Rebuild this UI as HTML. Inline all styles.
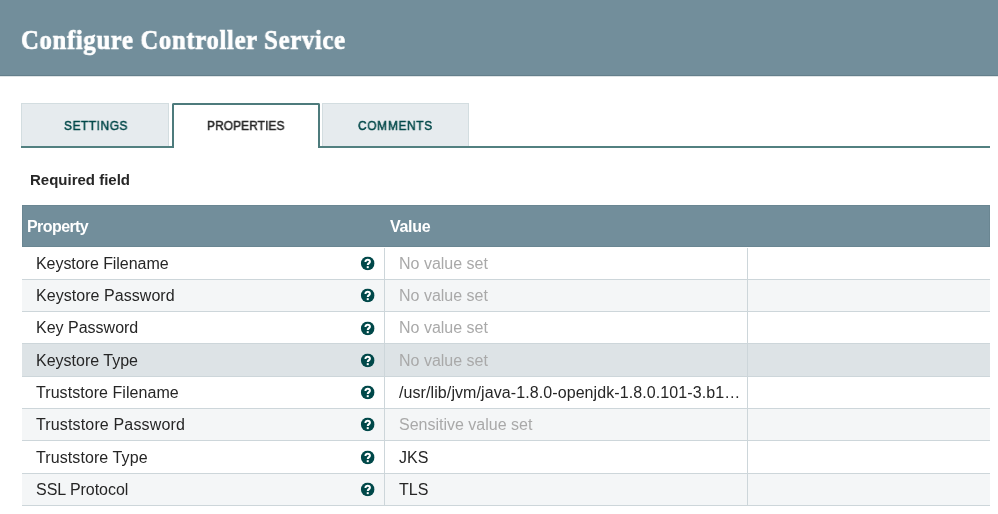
<!DOCTYPE html>
<html><head><meta charset="utf-8">
<style>
*{margin:0;padding:0;box-sizing:border-box}
html,body{width:998px;height:514px;overflow:hidden;background:#fff;font-family:"Liberation Sans",sans-serif;color:#262626}
.t{position:absolute;white-space:nowrap;line-height:1;will-change:transform}
#hdr{position:absolute;left:0;top:0;width:998px;height:76px;background:#728e9b;border-bottom:1px solid #647f8b}
#title{left:21px;top:26px;font-family:"Liberation Serif",serif;font-weight:bold;font-size:28px;letter-spacing:0.79px;color:#fff;-webkit-text-stroke:0.7px #fff;transform:scaleX(0.88);transform-origin:0 0}
.tab{position:absolute;top:103px;height:44px;background:#e6ebee;border:1px solid #d3dde0;border-bottom:none}
#tabline{position:absolute;left:21px;top:146px;width:969px;height:2px;background:#528080}
.tab.sel{background:#fff;border:2px solid #4d7b7c;border-bottom:none;height:45px;border-radius:2px 2px 0 0}
.tl{font-size:13.5px;font-weight:normal;-webkit-text-stroke:0.5px currentColor;color:#004849;top:119px;transform:scaleX(0.88);transform-origin:0 0}
#req{left:30px;top:171.5px;font-size:15px;font-weight:bold;color:#262626}
#th{position:absolute;left:22px;top:205px;width:968px;height:42px;background:#728e9b;border:1px solid #6a8692}
.th{color:#fff;font-weight:bold;font-size:16px;top:219px}
.row{position:absolute;left:22px;width:968px;border-bottom:1px solid #cdd6da}
.odd{background:#fff}
.even{background:#f4f6f7}
.hl{background:#dde3e6}
.vd{position:absolute;top:248px;width:1px;height:258px;background:#cdd6da}
.n{left:36px;font-size:16px}
.v{left:399px;font-size:16px}
.ph{color:#a9a9a9}
.q{position:absolute;left:360px;width:14px;height:14px;transform:translate(0.7px,0.4px)}
</style></head><body>
<div id="hdr"></div><div style="position:absolute;left:0;top:76px;width:998px;height:1px;background:#dfe4e6"></div>
<div class="t" id="title">Configure Controller Service</div>
<div class="tab" style="left:21px;width:148px"></div>
<div class="tab" style="left:322px;width:147px"></div>
<div id="tabline"></div>
<div class="tab sel" style="left:172px;width:148px"></div>
<div class="t tl" style="left:64px;letter-spacing:0.65px">SETTINGS</div>
<div class="t tl" style="left:207px;color:#262626;letter-spacing:0.13px">PROPERTIES</div>
<div class="t tl" style="left:358px;letter-spacing:0.8px">COMMENTS</div>
<div class="t" id="req">Required field</div>
<div id="th"></div>
<div class="t th" style="left:27px;letter-spacing:-0.58px">Property</div>
<div class="t th" style="left:390px;letter-spacing:-0.3px">Value</div>

<div class="row odd" style="top:247px;height:33px"></div>
<div class="row even" style="top:280px;height:32px"></div>
<div class="row odd" style="top:312px;height:32px"></div>
<div class="row hl" style="top:344px;height:33px"></div>
<div class="row odd" style="top:377px;height:32px"></div>
<div class="row even" style="top:409px;height:32px"></div>
<div class="row odd" style="top:441px;height:33px"></div>
<div class="row even" style="top:474px;height:32px"></div>
<div class="vd" style="left:384px"></div>
<div class="vd" style="left:747px"></div>

<div class="t n" style="top:256px;letter-spacing:-0.05px">Keystore Filename</div>
<div class="t n" style="top:288px;letter-spacing:0.05px">Keystore Password</div>
<div class="t n" style="top:320px;letter-spacing:0px">Key Password</div>
<div class="t n" style="top:353px;letter-spacing:0px">Keystore Type</div>
<div class="t n" style="top:385px;letter-spacing:0.06px">Truststore Filename</div>
<div class="t n" style="top:417px;letter-spacing:0.15px">Truststore Password</div>
<div class="t n" style="top:450px;letter-spacing:0.09px">Truststore Type</div>
<div class="t n" style="top:482px;letter-spacing:-0.04px">SSL Protocol</div>

<div class="t v ph" style="top:256px">No value set</div>
<div class="t v ph" style="top:288px">No value set</div>
<div class="t v ph" style="top:320px">No value set</div>
<div class="t v ph" style="top:353px">No value set</div>
<div class="t v" style="top:385px;letter-spacing:0.09px">/usr/lib/jvm/java-1.8.0-openjdk-1.8.0.101-3.b1…</div>
<div class="t v ph" style="top:417px">Sensitive value set</div>
<div class="t v" style="top:450px">JKS</div>
<div class="t v" style="top:482px">TLS</div>

<svg class="q" style="top:256px" viewBox="0 0 14 14"><circle cx="7" cy="7" r="6.8" fill="#004849"/><path d="M4.75 5.5C4.75 4.1 5.8 3.3 6.95 3.3C8.25 3.3 9.2 4.1 9.2 5.25C9.2 6.7 7.05 6.8 7.05 8.7" fill="none" stroke="#fff" stroke-width="2"/><rect x="6.05" y="9.75" width="2" height="2" fill="#fff"/></svg>
<svg class="q" style="top:288px" viewBox="0 0 14 14"><circle cx="7" cy="7" r="6.8" fill="#004849"/><path d="M4.75 5.5C4.75 4.1 5.8 3.3 6.95 3.3C8.25 3.3 9.2 4.1 9.2 5.25C9.2 6.7 7.05 6.8 7.05 8.7" fill="none" stroke="#fff" stroke-width="2"/><rect x="6.05" y="9.75" width="2" height="2" fill="#fff"/></svg>
<svg class="q" style="top:321px" viewBox="0 0 14 14"><circle cx="7" cy="7" r="6.8" fill="#004849"/><path d="M4.75 5.5C4.75 4.1 5.8 3.3 6.95 3.3C8.25 3.3 9.2 4.1 9.2 5.25C9.2 6.7 7.05 6.8 7.05 8.7" fill="none" stroke="#fff" stroke-width="2"/><rect x="6.05" y="9.75" width="2" height="2" fill="#fff"/></svg>
<svg class="q" style="top:353px" viewBox="0 0 14 14"><circle cx="7" cy="7" r="6.8" fill="#004849"/><path d="M4.75 5.5C4.75 4.1 5.8 3.3 6.95 3.3C8.25 3.3 9.2 4.1 9.2 5.25C9.2 6.7 7.05 6.8 7.05 8.7" fill="none" stroke="#fff" stroke-width="2"/><rect x="6.05" y="9.75" width="2" height="2" fill="#fff"/></svg>
<svg class="q" style="top:385px" viewBox="0 0 14 14"><circle cx="7" cy="7" r="6.8" fill="#004849"/><path d="M4.75 5.5C4.75 4.1 5.8 3.3 6.95 3.3C8.25 3.3 9.2 4.1 9.2 5.25C9.2 6.7 7.05 6.8 7.05 8.7" fill="none" stroke="#fff" stroke-width="2"/><rect x="6.05" y="9.75" width="2" height="2" fill="#fff"/></svg>
<svg class="q" style="top:417px" viewBox="0 0 14 14"><circle cx="7" cy="7" r="6.8" fill="#004849"/><path d="M4.75 5.5C4.75 4.1 5.8 3.3 6.95 3.3C8.25 3.3 9.2 4.1 9.2 5.25C9.2 6.7 7.05 6.8 7.05 8.7" fill="none" stroke="#fff" stroke-width="2"/><rect x="6.05" y="9.75" width="2" height="2" fill="#fff"/></svg>
<svg class="q" style="top:450px" viewBox="0 0 14 14"><circle cx="7" cy="7" r="6.8" fill="#004849"/><path d="M4.75 5.5C4.75 4.1 5.8 3.3 6.95 3.3C8.25 3.3 9.2 4.1 9.2 5.25C9.2 6.7 7.05 6.8 7.05 8.7" fill="none" stroke="#fff" stroke-width="2"/><rect x="6.05" y="9.75" width="2" height="2" fill="#fff"/></svg>
<svg class="q" style="top:482px" viewBox="0 0 14 14"><circle cx="7" cy="7" r="6.8" fill="#004849"/><path d="M4.75 5.5C4.75 4.1 5.8 3.3 6.95 3.3C8.25 3.3 9.2 4.1 9.2 5.25C9.2 6.7 7.05 6.8 7.05 8.7" fill="none" stroke="#fff" stroke-width="2"/><rect x="6.05" y="9.75" width="2" height="2" fill="#fff"/></svg>
</body></html>
